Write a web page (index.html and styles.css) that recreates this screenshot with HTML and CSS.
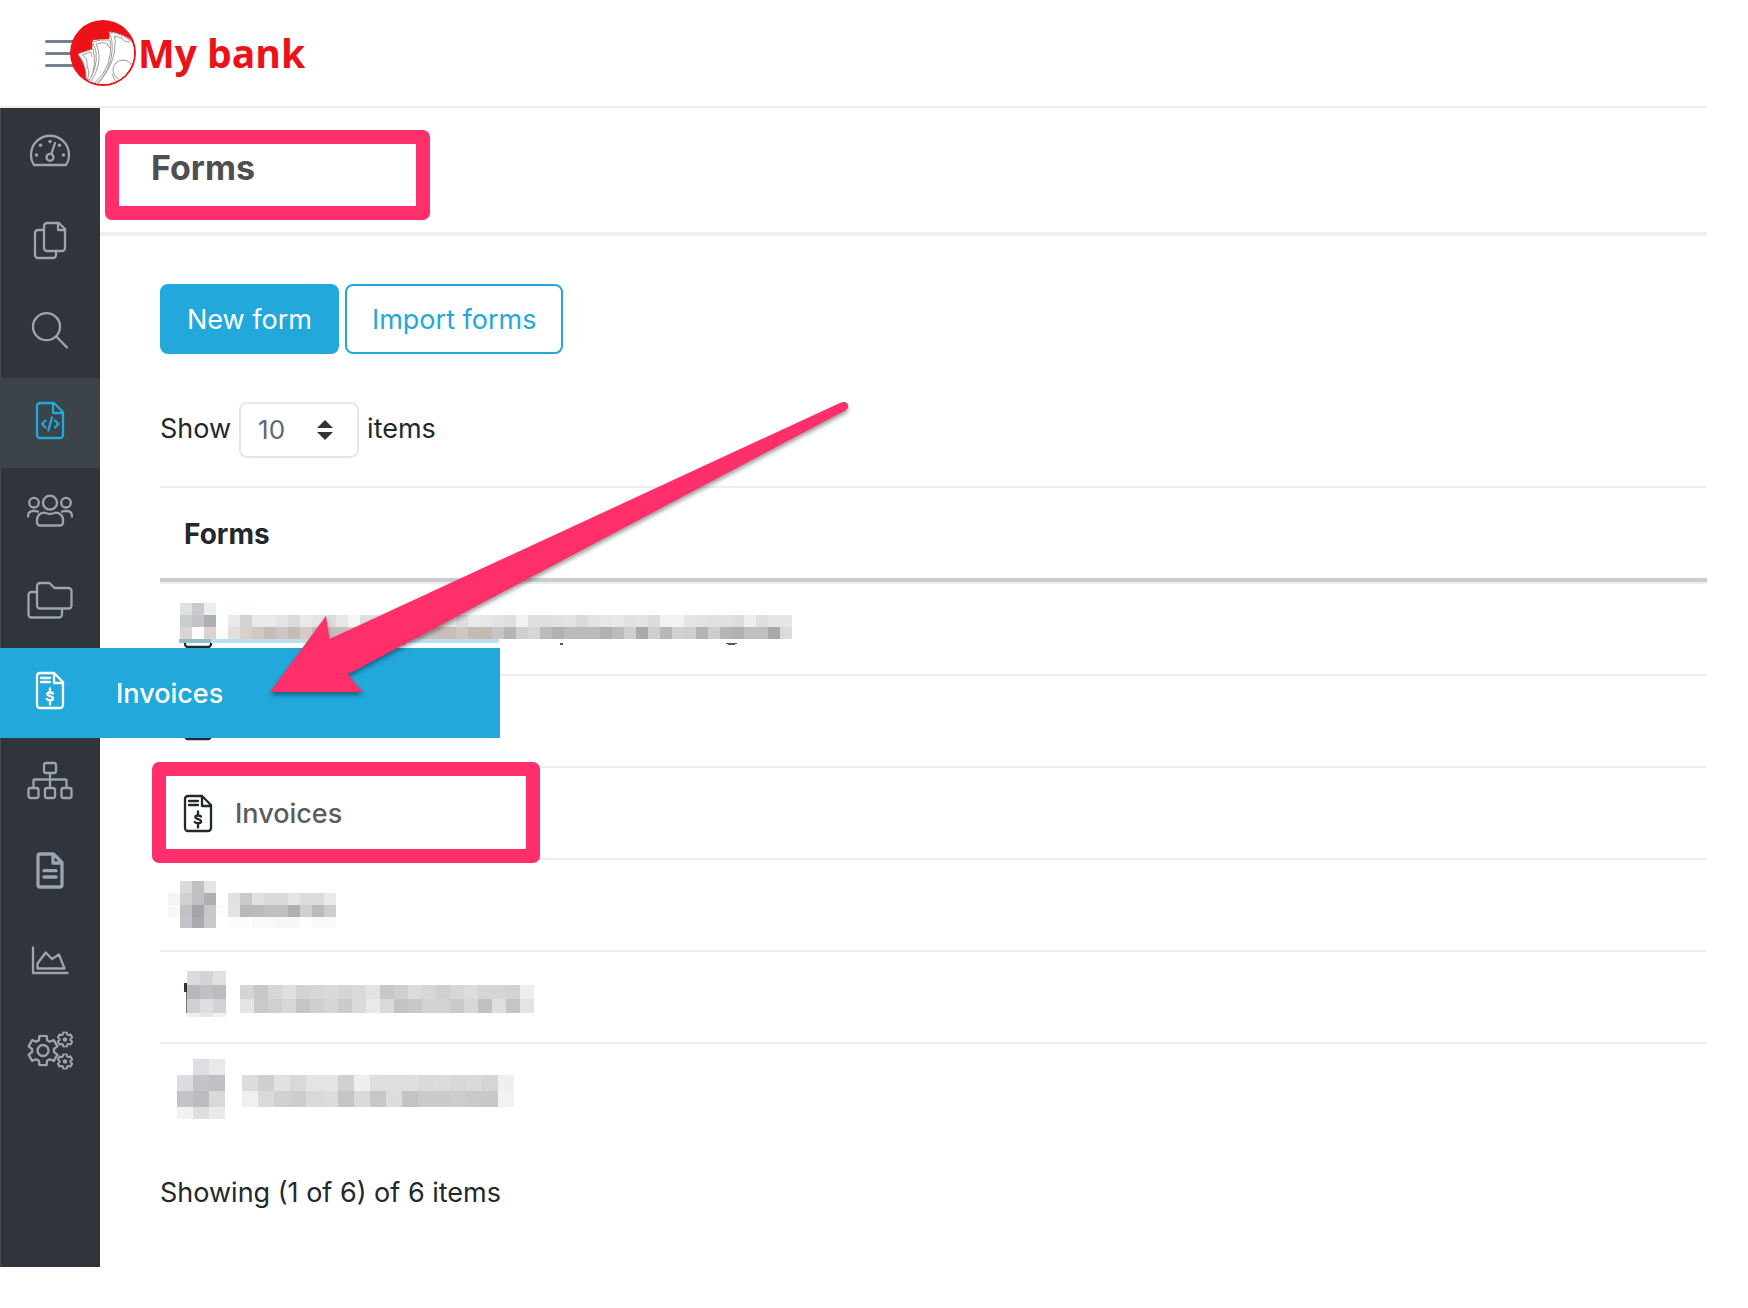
FILE: index.html
```html
<!DOCTYPE html>
<html lang="en">
<head>
<meta charset="utf-8">
<title>Forms - My bank</title>
<link rel="stylesheet" href="styles.css">
</head>
<body>
<svg class="sprite" aria-hidden="true">
  <symbol id="i-invoice" viewBox="0 0 48 40">
    <path d="M14 3h14l9 9v23a3 3 0 0 1-3 3H14a3 3 0 0 1-3-3V6a3 3 0 0 1 3-3zM28 3v10h9M15 8h9M15 12h9"/>
    <path d="M27 23.500c-1-1.200-5.500-1.700-5.700.6-.1 2.400 5.900 1.500 5.800 4.300-.1 2.400-4.800 2.200-6.300.6M24 18.500v3.500M24 31v3.500"/>
  </symbol>
  <symbol id="i-gear" viewBox="-16 -16 32 32">
    <path d="M-3.600-14.600H3.600L4.100-10.200L6.800-8.700L10.800-10.400L14.400-4.100L10.900-1.500V1.500L14.400 4.100L10.800 10.400L6.800 8.700L4.100 10.200L3.600 14.600H-3.600L-4.100 10.200L-6.800 8.700L-10.800 10.400L-14.400 4.100L-10.900 1.500V-1.500L-14.400-4.100L-10.800-10.400L-6.800-8.700L-4.100-10.200Z"/>
  </symbol>
</svg>

<div class="app">
  <header class="topbar">
    <button class="burger" type="button" aria-label="Toggle menu"><span></span><span></span><span></span></button>
    <a class="brand" href="#">
      <svg class="brand-mark" viewBox="0 0 66 66" aria-hidden="true">
        <defs><clipPath id="disc"><circle cx="33" cy="33" r="31"/></clipPath></defs>
        <circle cx="33" cy="33" r="33" fill="#ed1118"/>
        <g clip-path="url(#disc)" fill="#fff" stroke="#9d9d9d" stroke-width="1">
          <path stroke="none" d="M8 34L22 29L23 20L39 19L40 12Q54 13 66 24V66H18Q17 46 8 34Z"/>
          <path d="M8 34L23 29Q27 45 20 60L16 58Q17 45 8 34Z"/>
          <path d="M12 35L21 32M12 35Q18 38 17 45Q20 52 18 58M21 32Q21 34 22 37" fill="none"/>
          <path d="M22 22Q31 19 40 20Q44 46 24 64L18 62Q28 48 26 32Q25 26 22 22Z"/>
          <path d="M26 24Q32 22 36 23M26 24Q31 34 28 46Q26 54 21 61M37 23Q37 26 40 28" fill="none"/>
          <path d="M39 12Q54 13 66 26V66H25Q41 50 42 32Q43 19 39 12Z"/>
          <path d="M44 16Q46 20 45 24Q46 42 28 64M44 16L52 18Q53 22 60 22" fill="none"/>
          <circle cx="53" cy="50" r="10"/>
          <path d="M42 54Q44 60 49 64" fill="none"/>
        </g>
      </svg>
      <span class="brand-name">My bank</span>
    </a>
  </header>

  <div class="body">
    <nav class="sidebar" aria-label="Main">
      <a class="item" href="#" aria-label="Dashboard"><svg class="icon" viewBox="0 0 48 40"><path d="M8 35A19 19 0 1 1 40 35ZM25.300 24L29 13"/><circle cx="24" cy="27.300" r="3.500"/><g class="solid"><circle cx="10.500" cy="25" r="1.700"/><circle cx="14.500" cy="15.300" r="1.700"/><circle cx="24" cy="11.500" r="1.700"/><circle cx="33.500" cy="15.300" r="1.700"/><circle cx="37.500" cy="25" r="1.700"/></g></svg></a>
      <a class="item" href="#" aria-label="Pages"><svg class="icon" viewBox="0 0 48 40"><path d="M18 10H12a3 3 0 0 0-3 3v22a3 3 0 0 0 3 3h15a3 3 0 0 0 3-3v-4"/><path d="M21 3h12l6 6v19a3 3 0 0 1-3 3H21a3 3 0 0 1-3-3V6a3 3 0 0 1 3-3zM32 3v7h7"/></svg></a>
      <a class="item" href="#" aria-label="Search"><svg class="icon" viewBox="0 0 48 40"><circle cx="20.500" cy="16.700" r="13.500"/><path d="M30.300 26.500L41 37.500"/></svg></a>
      <a class="item current" href="#" aria-label="Forms"><svg class="icon" viewBox="0 0 48 40"><path d="M14 3h14l9 9v23a3 3 0 0 1-3 3H14a3 3 0 0 1-3-3V6a3 3 0 0 1 3-3zM27 3v10h10"/><path d="M19.500 20.500L16 24l3.500 3.500M29 20.500l3.500 3.500L29 27.500M26 17.500L22.300 30.500"/></svg></a>
      <a class="item" href="#" aria-label="Users"><svg class="icon" viewBox="0 0 48 40"><circle cx="24" cy="12.700" r="7"/><circle cx="8" cy="12.700" r="4.800"/><circle cx="40" cy="12.700" r="4.800"/><path d="M14 35.500a3 3 0 0 1-3-3V30a7 7 0 0 1 7-7.300c2 0 3 1.300 6 1.300s4-1.300 6-1.300a7 7 0 0 1 7 7.300v2.500a3 3 0 0 1-3 3zM2 26.500c0-4 2-5.500 5-5.500h2.500l2.500.7M46 26.500c0-4-2-5.500-5-5.500h-2.500l-2.500.7"/></svg></a>
      <a class="item" href="#" aria-label="Folders"><svg class="icon" viewBox="0 0 48 40"><path d="M11 12H5.500a3 3 0 0 0-3 3v19.500a3 3 0 0 0 3 3H33a3 3 0 0 0 3-3V29"/><path d="M14 3h9.500l5 5H42.500a3 3 0 0 1 3 3v14.500a3 3 0 0 1-3 3H14a3 3 0 0 1-3-3V6a3 3 0 0 1 3-3z"/></svg></a>
      <a class="item hovered" href="#"><svg class="icon" aria-hidden="true"><use href="#i-invoice"/></svg><span class="label">Invoices</span></a>
      <a class="item" href="#" aria-label="Structure"><svg class="icon" viewBox="0 0 48 40"><rect x="18" y="3" width="12" height="10" rx="2"/><rect x="2.500" y="28" width="10" height="10" rx="2"/><rect x="19" y="28" width="10" height="10" rx="2"/><rect x="35.500" y="28" width="10" height="10" rx="2"/><path d="M24 13v15M7.500 28v-7.500a1 1 0 0 1 1-1h31a1 1 0 0 1 1 1V28"/></svg></a>
      <a class="item" href="#" aria-label="Documents"><svg class="icon bold" viewBox="0 0 48 40"><path d="M14 4h13.500l8.500 8.500V35a2 2 0 0 1-2 2H14a2 2 0 0 1-2-2V6a2 2 0 0 1 2-2zM27 4v9h9M18 20.700h12M18 27h12"/></svg></a>
      <a class="item" href="#" aria-label="Reports"><svg class="icon" viewBox="0 0 48 40"><path d="M7 7.500V33h34.500M11.500 28.500v-5L19.700 12.500L26 19l7-4.500l5.500 14z"/></svg></a>
      <a class="item" href="#" aria-label="Settings"><svg class="icon" viewBox="0 0 48 40"><use href="#i-gear" x="1" y="4.500" width="32" height="32"/><circle cx="17" cy="20.500" r="5.500"/><g class="thick"><use href="#i-gear" x="31" y="1.500" width="16" height="16"/><use href="#i-gear" x="31" y="23.500" width="16" height="16"/></g><g class="solid"><circle cx="39" cy="9.500" r="2.200"/><circle cx="39" cy="31.500" r="2.200"/></g></svg></a>
    </nav>

    <main class="main">
      <div class="heading">
        <h1>Forms</h1>
        <div class="marker marker-title"></div>
      </div>

      <div class="content">
        <div class="actions">
          <button class="btn btn-primary" type="button">New form</button>
          <button class="btn btn-outline" type="button">Import forms</button>
        </div>

        <div class="pager">
          <label for="page-size">Show</label>
          <span class="select">
            <select id="page-size"><option>10</option><option>25</option><option>50</option></select>
            <svg class="caret" viewBox="0 0 16 20" aria-hidden="true"><path d="M0 8L8 0l8 8zM0 12h16l-8 8z"/></svg>
          </span>
          <span class="unit">items</span>
        </div>

        <table class="forms">
          <thead><tr><th scope="col">Forms</th></tr></thead>
          <tbody>
            <tr><td><div class="row"><svg class="icon" viewBox="0 0 48 40" aria-hidden="true"><path d="M11 30v5a3 3 0 0 0 3 3h20a3 3 0 0 0 3-3v-5"/></svg><svg class="mosaic" data-mosaic="first" aria-hidden="true"></svg></div></td></tr>
            <tr><td><div class="row"><svg class="icon" aria-hidden="true"><use href="#i-invoice"/></svg></div></td></tr>
            <tr><td><div class="row"><svg class="icon" aria-hidden="true"><use href="#i-invoice"/></svg><a href="#">Invoices</a><div class="marker marker-row"></div></div></td></tr>
            <tr><td><div class="row"><svg class="mosaic" data-mosaic="fourth" aria-hidden="true"></svg></div></td></tr>
            <tr><td><div class="row"><svg class="mosaic" data-mosaic="fifth" aria-hidden="true"></svg></div></td></tr>
            <tr><td><div class="row"><svg class="mosaic" data-mosaic="sixth" aria-hidden="true"></svg></div></td></tr>
          </tbody>
        </table>

        <p class="summary">Showing (1 of 6) of 6 items</p>
      </div>

      <svg class="arrow" viewBox="0 0 600 310" aria-hidden="true"><path d="M10 302L66 226L69.500 249L581 12.500C587 10 591 17 586 20L87.500 284.500L103 302Z"/></svg>
    </main>
  </div>
</div>
<script src="mosaic.js"></script>
</body>
</html>
```
FILE: styles.css
```css
* { box-sizing: border-box; }
body {
  margin: 0;
  background: #fff;
  color: #23282c;
  font: 27px/42px Inter, "Liberation Sans", sans-serif;
}
a { color: inherit; text-decoration: none; }
button, select { font: inherit; }
.sprite { position: absolute; width: 0; height: 0; }

.app {
  display: flex;
  flex-direction: column;
  min-height: calc(100vh - 41px);
  margin-bottom: 41px;
}
.topbar {
  display: flex;
  align-items: center;
  height: 108px;
  margin-right: 41px;
  padding-left: 45px;
  border-bottom: 2px solid #eee;
}
.burger {
  display: flex;
  flex-direction: column;
  gap: 9px;
  width: 36px;
  padding: 0;
  border: 0;
  background: none;
}
.burger span { height: 3px; border-radius: 2px; background: #73818f; }
.brand { display: flex; align-items: center; gap: 2px; margin-left: -11px; }
.brand-mark { position: relative; width: 66px; height: 66px; }
.brand-name { color: #ed1118; font: bold 39px/54px "Open Sans", "Noto Sans", sans-serif; }

.body { display: flex; flex: 1; }
.sidebar {
  position: relative;
  z-index: 1;
  flex: none;
  width: 100px;
  background: #2f353a;
  box-shadow: inset 1px 0 #464b50;
}
.item {
  display: flex;
  align-items: center;
  height: 90px;
  padding: 0 26px 7px;
  color: #9ba4b0;
}
.item.current { background: #3c4349; color: #22a8da; }
.item.hovered { gap: 42px; width: 500px; background: #22a8da; color: #fff; }
.label { padding-top: 9px; font-weight: 500; }

.icon {
  flex: none;
  width: 48px;
  height: 40px;
  fill: none;
  stroke: currentColor;
  stroke-width: 2.3;
  stroke-linecap: round;
  stroke-linejoin: round;
}
.icon.bold { stroke-width: 3.3; }
.icon .solid { fill: currentColor; stroke: none; }
.icon .thick { stroke-width: 4; }

.main { position: relative; flex: 1; min-width: 0; margin-right: 41px; }
.heading {
  position: relative;
  height: 128px;
  padding: 36px 51px;
  border-bottom: 4px solid #eee;
}
h1 { margin: 0; color: #4f4f4f; font-size: 34px; line-height: 48px; font-weight: 700; }
.marker { position: absolute; border: 14px solid #ff2f6c; border-radius: 7px; }
.marker-title { left: 5px; top: 22px; width: 325px; height: 90px; }
.marker-row { left: -8px; top: -6px; width: 388px; height: 101px; }

.content { padding: 48px 0 0 60px; }
.actions { display: flex; gap: 6px; }
.btn {
  padding: 13px 25px 11px;
  border: 2px solid #22a8da;
  border-radius: 8px;
}
.btn-primary { background: #22a8da; color: #fff; }
.btn-outline { background: #fff; color: #22a8da; }
.pager { display: flex; align-items: center; gap: 8px; margin: 48px 0 28px; }
.pager label, .unit { padding-bottom: 2px; }
.select { position: relative; }
.select select {
  display: block;
  width: 120px;
  height: 56px;
  padding: 0 17px;
  border: 2px solid #e4e7ea;
  border-radius: 8px;
  background: #fff;
  color: #5c6873;
  font-size: 26px;
  appearance: none;
}
.caret { position: absolute; right: 26px; top: 18px; width: 16px; height: 20px; fill: #2f353a; pointer-events: none; }

.forms { width: 100%; border-spacing: 0; }
.forms th {
  height: 96px;
  padding: 2px 24px 0;
  border-top: 2px solid #eee;
  border-bottom: 4px solid #c8ced3;
  font-size: 28px;
  font-weight: 700;
  text-align: left;
}
.forms td { padding: 0; border-top: 2px solid #eee; }
.row {
  position: relative;
  display: flex;
  align-items: center;
  gap: 13px;
  height: 90px;
  padding-left: 14px;
}
.row a { padding-top: 2px; color: #5c5c5c; font-weight: 500; }
.mosaic { position: absolute; left: 0; top: 1px; width: 640px; height: 90px; }
.summary { margin: 0; padding: 38px 0; }

.arrow {
  position: absolute;
  left: 160px;
  top: 282px;
  z-index: 2;
  width: 600px;
  height: 310px;
  overflow: visible;
  fill: #ff2f6c;
  filter: drop-shadow(0 3px 2px rgba(0, 0, 0, .4));
  pointer-events: none;
}
```
FILE: mosaic.js
```javascript
// Redacted names: each strip is [x, y, cell width, cell height, colours].
// Two digits stand for a grey, "-" for an empty cell.
const strips = {
  first: [
    [20, 18, 12, 12, 'dfe1e0 c9cacc eceeed - fd fd'],
    [20, 30, 12, 12, 'cacdce c2c4c8 adb0b3 - e8e9ea d0d2d4 e8e9ea e8e9ea e2e4e6 d9dbdd e9eaec e2e4e5 d9dbdd e5e8e7 f4f7f6 dddfe1 e2e4e6 e8eae9 e2e4e6 dddfe1 e8eae9 e2e4e6 e8eae9 dbdde0 e8eae9 e6e8e8 e1e4e6 df f2 de de e1 e3 da e2 e7 e8 e1 e3 dd f2 f2 e6 e2 e0 e1 dd ee df e6 e6'],
    [20, 42, 12, 12, 'dbd4d2 ff dad3d1 fc e4dfdd dcd0ce d2c8c6 c6bcba cfc5c4 c6bbb9 d6cbc9 c8bebc c6bdbb c8bebc d6cbc9 ccc3c1 c6bbb9 ccc3c1 ccc3c1 ccc3c1 ccc3c1 c9bdbb c9bdbb d0c7c3 c5bab6 c5bab6 c9c5c2 b4b6b6 cf d6 bb b1 bb bb bb b1 bb cf aa cf b7 d1 cf b4 ce b6 b1 c0 c0 a9 db'],
    [19, 54, 32, 4, '91bccb b9e2f0 b9e2f0 b9e2f0 b9e2f0 b9e2f0 b9e2f0 b9e2f0 b9e2f0 b9e2f0'],
    [242, 58, 3, 2, '55'],
    [400, 58, 3, 2, '55'],
    [566, 58, 11, 1, '55'],
    [568, 59, 7, 1, '55']
  ],
  fourth: [
    [20, 20, 12, 12, 'd9dbda c0c1c3 e3e4e4'],
    [8, 32, 12, 12, 'f4 cfd2d1 c0c1c4 afb0b2 - e1 c9 e1 da da e4 dc dc ea'],
    [8, 44, 12, 12, 'f8 c0c1c4 a5a6a9 c7c8ca fc e2 b9 bb c0 c0 af d0 ba cd'],
    [20, 56, 12, 11, 'c3c4c7 a9aaac c8c9cb - fc fc f9 f9 f7 f7 fe f9 f9']
  ],
  fifth: [
    [24, 30, 3, 9, '2f353a'],
    [26, 39, 1, 21, '77'],
    [27, 18, 13, 14, 'dadcdb d3d4d6 e0e2e1'],
    [27, 32, 13, 14, 'b7b8bb c0c1c4 bbbcbf'],
    [27, 46, 13, 14, 'cfd1cf dddee1 d1d2d5'],
    [27, 60, 13, 4, 'ee e6 f2'],
    [80, 32, 14, 14, 'd5 c8 d7 df d3 d6 d9 d5 d9 e3 c8 cf dc d7 cf d7 dd d5 d5 d2 ee'],
    [80, 46, 14, 14, 'e4 c9 d0 d7 c5 cf d5 cb da e9 da c3 c8 d2 d2 ca d7 c1 df c5 e4']
  ],
  sixth: [
    [17, 14, 16, 16, '- dddee1 e8eae9'],
    [17, 30, 16, 16, 'dcdde0 c3c4c7 bfc0c3'],
    [17, 46, 16, 16, 'c3c4c7 bcbdc0 d8dad9'],
    [17, 62, 16, 12, 'f2 de e9ebea'],
    [82, 30, 16, 16, 'dc cf e1 d9 e4 e4 d0 ee df de df da dc d8 da d5 ef'],
    [82, 46, 16, 16, 'f0 da d0 cd d9 dc c5 da c7 dc c3 cb cb cc c9 c8 f2']
  ]
};

document.querySelectorAll('[data-mosaic]').forEach(svg => {
  for (const [x, y, w, h, colours] of strips[svg.dataset.mosaic]) {
    colours.split(' ').forEach((c, i) => {
      if (c === '-') return;
      const rect = document.createElementNS('http://www.w3.org/2000/svg', 'rect');
      rect.setAttribute('x', x + i * w);
      rect.setAttribute('y', y);
      rect.setAttribute('width', w);
      rect.setAttribute('height', h);
      rect.setAttribute('fill', '#' + (c.length === 2 ? c + c + c : c));
      svg.append(rect);
    });
  }
});
```
